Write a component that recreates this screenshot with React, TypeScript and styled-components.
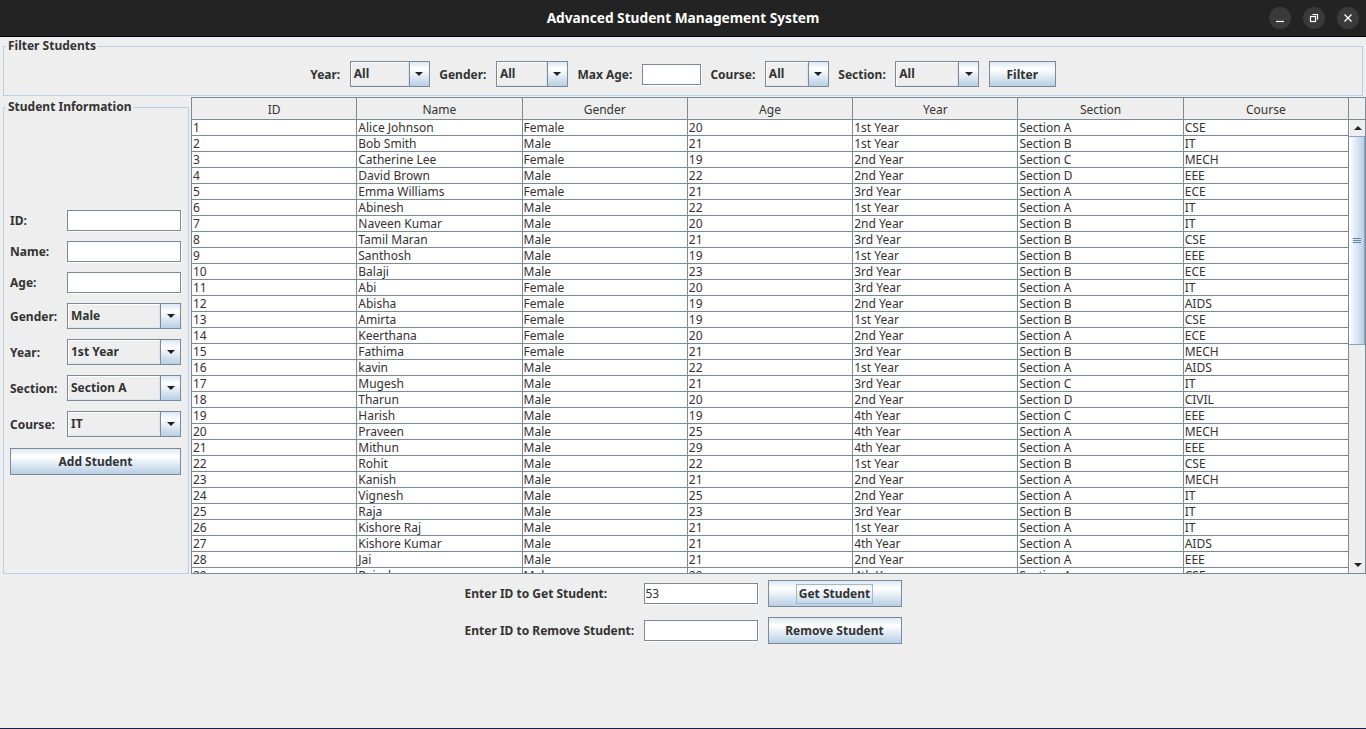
import React from 'react';
import styled, { createGlobalStyle } from 'styled-components';

const GlobalStyle = createGlobalStyle`
  html, body { margin: 0; padding: 0; background: #eeeeee; }
  body { font-family: "Noto Sans", "Open Sans", sans-serif; }
  * { box-sizing: border-box; }
`;

const Window = styled.div`
  width: 1366px;
  height: 729px;
  display: flex;
  flex-direction: column;
  background: #eeeeee;
  border-bottom: 1px solid #16204a;
  overflow: hidden;
  color: #333333;
  font-family: "Noto Sans", "Open Sans", sans-serif;
`;

const TitleBar = styled.div`
  height: 37px;
  flex: none;
  background: #232323;
  border-bottom: 1px solid #000;
  display: grid;
  grid-template-columns: 1fr auto 1fr;
  align-items: center;
`;

const Title = styled.div`
  color: #ffffff;
  font-weight: bold;
  font-size: 13.7px;
  line-height: 20px;
  text-align: center;
`;

const WinButtons = styled.div`
  display: flex;
  justify-content: flex-end;
  gap: 12px;
  margin-right: 7px;
`;

const WinButton = styled.div`
  width: 22px;
  height: 22px;
  border-radius: 50%;
  background: #3a3a3a;
  display: flex;
  align-items: center;
  justify-content: center;
`;

const FieldSet = styled.fieldset`
  margin: 1px 3px 0;
  padding: 7px 0 8px;
  border: 1px solid #b8cfe5;
  min-width: 0;
`;

const Legend = styled.legend`
  font-size: 12px;
  font-weight: bold;
  line-height: 16px;
  padding: 0 2px;
  margin-left: 2px;
  color: #333333;
`;

const FilterRow = styled.div`
  display: flex;
  justify-content: center;
  align-items: center;
  gap: 9.5px;
  height: 26px;
`;

const Label = styled.span`
  font-size: 12px;
  font-weight: bold;
  color: #333333;
  white-space: nowrap;
`;

const ComboBox = styled.div<{ $w: number }>`
  width: ${(p) => p.$w}px;
  height: 26px;
  flex: none;
  display: flex;
  border: 1px solid #7a8a99;
  background: #eeeeee;
`;

const ComboValue = styled.div`
  flex: 1;
  padding-left: 2px;
  font-size: 12px;
  font-weight: bold;
  line-height: 22px;
  border: 1px solid #ffffff;
  border-right-color: #dde4ec;
  border-bottom-color: #dde4ec;
  color: #333333;
`;

const ComboArrow = styled.div`
  width: 20px;
  flex: none;
  border-left: 1px solid #7a8a99;
  background: linear-gradient(to bottom, #dde8f3 0%, #ffffff 30%, #b8cfe5 100%);
  display: flex;
  align-items: center;
  justify-content: center;
`;

const TriangleDown = styled.div`
  width: 0;
  height: 0;
  border-left: 4px solid transparent;
  border-right: 4px solid transparent;
  border-top: 4px solid #222222;
`;

const TriangleUp = styled.div`
  width: 0;
  height: 0;
  border-left: 4px solid transparent;
  border-right: 4px solid transparent;
  border-bottom: 4px solid #222222;
`;

const TextField = styled.div<{ $w: number }>`
  width: ${(p) => p.$w}px;
  height: 21px;
  flex: none;
  background: #ffffff;
  border: 1px solid #7a8a99;
  box-shadow: 1px 1px 0 #ffffff;
  font-size: 12px;
  line-height: 19px;
  padding-left: 1px;
  color: #333333;
`;

const Button = styled.div<{ $w: number; $h: number }>`
  width: ${(p) => p.$w}px;
  height: ${(p) => p.$h}px;
  flex: none;
  border: 1px solid #7a8a99;
  background: linear-gradient(to bottom, #dde8f3 0%, #ffffff 30%, #b8cfe5 100%);
  display: flex;
  align-items: center;
  justify-content: center;
  font-size: 12px;
  font-weight: bold;
  color: #333333;
`;

const FocusText = styled.span`
  outline: 1px solid #a3b8cc;
  padding: 1px 2px;
  line-height: 16px;
`;

const Main = styled.div`
  height: 478px;
  flex: none;
  display: flex;
  padding-left: 3px;
  gap: 2px;
`;

const SideSet = styled.fieldset`
  margin: 3px 0 0 0;
  padding: 0;
  width: 186px;
  height: 475px;
  border: 1px solid #b8cfe5;
  min-width: 0;
  display: flex;
  flex-direction: column;
`;

const FormArea = styled.div`
  flex: 1;
  display: flex;
  align-items: center;
  justify-content: flex-start;
  padding: 0 0 3px 6px;
`;

const FormGrid = styled.div`
  display: grid;
  grid-template-columns: 57px 114px;
  row-gap: 10px;
  align-items: center;
`;

const FullRow = styled.div`
  grid-column: 1 / span 2;
  margin-top: 1px;
`;

const ScrollPane = styled.div`
  margin-top: 1px;
  width: 1175px;
  height: 477px;
  border: 1px solid #7a8a99;
  display: flex;
  background: #ffffff;
`;

const TableArea = styled.div`
  width: 1157px;
  display: flex;
  flex-direction: column;
  overflow: hidden;
`;

const HeaderRow = styled.div`
  height: 22px;
  flex: none;
  display: grid;
  grid-template-columns: repeat(7, 1fr);
  border-bottom: 1px solid #7a8a99;
  background: #eeeeee;
`;

const HeaderCell = styled.div`
  border-right: 1px solid #7a8a99;
  font-size: 12px;
  line-height: 23px;
  text-align: center;
  color: #333333;
`;

const Body = styled.div`
  flex: 1;
  overflow: hidden;
  background: #ffffff;
`;

const Row = styled.div`
  height: 16px;
  display: grid;
  grid-template-columns: repeat(7, 1fr);
  border-bottom: 1px solid #7a8a99;
`;

const Cell = styled.div`
  border-right: 1px solid #7a8a99;
  font-size: 12px;
  line-height: 15px;
  padding-left: 1px;
  white-space: nowrap;
  overflow: hidden;
  color: #333333;
`;

const ScrollBar = styled.div`
  width: 16px;
  display: flex;
  flex-direction: column;
  background: #eeeeee;
`;

const Corner = styled.div`
  height: 22px;
  flex: none;
  background: #eeeeee;
  border-bottom: 1px solid #7a8a99;
`;

const ArrowButton = styled.div`
  height: 16px;
  flex: none;
  background: #eeeeee;
  display: flex;
  align-items: center;
  justify-content: center;
  border-left: 1px solid #ffffff;
`;

const Thumb = styled.div<{ $h: number }>`
  height: ${(p) => p.$h}px;
  flex: none;
  border-top: 1px solid #8ba4c4;
  border-bottom: 1px solid #8ba4c4;
  border-right: 1px solid #8ba4c4;
  background: linear-gradient(to right, #ffffff 0%, #eaf1f8 30%, #b8cfe5 100%);
  display: flex;
  align-items: center;
  justify-content: center;
`;

const Grip = styled.div`
  width: 8px;
  height: 5px;
  background: repeating-linear-gradient(to bottom, #6383b3 0 1px, transparent 1px 2px);
`;

const Track = styled.div`
  flex: 1;
  background: #eeeeee;
`;

const BottomPanel = styled.div`
  flex: 1;
  display: flex;
  justify-content: center;
  padding-top: 6px;
`;

const BottomGrid = styled.div`
  display: grid;
  grid-template-columns: 179px 124px 134px;
  grid-auto-rows: 27px;
  row-gap: 10px;
  align-items: center;
  align-content: start;
`;

const Combo = ({ w, value }: { w: number; value: string }) => (
  <ComboBox $w={w}>
    <ComboValue>{value}</ComboValue>
    <ComboArrow>
      <TriangleDown />
    </ComboArrow>
  </ComboBox>
);

const columns = ['ID', 'Name', 'Gender', 'Age', 'Year', 'Section', 'Course'];

const rows: string[][] = [
  ['1', 'Alice Johnson', 'Female', '20', '1st Year', 'Section A', 'CSE'],
  ['2', 'Bob Smith', 'Male', '21', '1st Year', 'Section B', 'IT'],
  ['3', 'Catherine Lee', 'Female', '19', '2nd Year', 'Section C', 'MECH'],
  ['4', 'David Brown', 'Male', '22', '2nd Year', 'Section D', 'EEE'],
  ['5', 'Emma Williams', 'Female', '21', '3rd Year', 'Section A', 'ECE'],
  ['6', 'Abinesh', 'Male', '22', '1st Year', 'Section A', 'IT'],
  ['7', 'Naveen Kumar', 'Male', '20', '2nd Year', 'Section B', 'IT'],
  ['8', 'Tamil Maran', 'Male', '21', '3rd Year', 'Section B', 'CSE'],
  ['9', 'Santhosh', 'Male', '19', '1st Year', 'Section B', 'EEE'],
  ['10', 'Balaji', 'Male', '23', '3rd Year', 'Section B', 'ECE'],
  ['11', 'Abi', 'Female', '20', '3rd Year', 'Section A', 'IT'],
  ['12', 'Abisha', 'Female', '19', '2nd Year', 'Section B', 'AIDS'],
  ['13', 'Amirta', 'Female', '19', '1st Year', 'Section B', 'CSE'],
  ['14', 'Keerthana', 'Female', '20', '2nd Year', 'Section A', 'ECE'],
  ['15', 'Fathima', 'Female', '21', '3rd Year', 'Section B', 'MECH'],
  ['16', 'kavin', 'Male', '22', '1st Year', 'Section A', 'AIDS'],
  ['17', 'Mugesh', 'Male', '21', '3rd Year', 'Section C', 'IT'],
  ['18', 'Tharun', 'Male', '20', '2nd Year', 'Section D', 'CIVIL'],
  ['19', 'Harish', 'Male', '19', '4th Year', 'Section C', 'EEE'],
  ['20', 'Praveen', 'Male', '25', '4th Year', 'Section A', 'MECH'],
  ['21', 'Mithun', 'Male', '29', '4th Year', 'Section A', 'EEE'],
  ['22', 'Rohit', 'Male', '22', '1st Year', 'Section B', 'CSE'],
  ['23', 'Kanish', 'Male', '21', '2nd Year', 'Section A', 'MECH'],
  ['24', 'Vignesh', 'Male', '25', '2nd Year', 'Section A', 'IT'],
  ['25', 'Raja', 'Male', '23', '3rd Year', 'Section B', 'IT'],
  ['26', 'Kishore Raj', 'Male', '21', '1st Year', 'Section A', 'IT'],
  ['27', 'Kishore Kumar', 'Male', '21', '4th Year', 'Section A', 'AIDS'],
  ['28', 'Jai', 'Male', '21', '2nd Year', 'Section A', 'EEE'],
  ['29', 'Rajesh', 'Male', '20', '4th Year', 'Section A', 'CSE'],
];

export default function App() {
  return (
    <>
      <GlobalStyle />
      <Window>
        <TitleBar>
          <div />
          <Title>Advanced Student Management System</Title>
          <WinButtons>
            <WinButton>
              <svg width="10" height="10" viewBox="0 0 10 10">
                <line x1="1" y1="8.5" x2="9" y2="8.5" stroke="#fff" strokeWidth="1.2" />
              </svg>
            </WinButton>
            <WinButton>
              <svg width="10" height="10" viewBox="0 0 10 10">
                <rect x="1.5" y="3.5" width="5" height="5" fill="none" stroke="#fff" strokeWidth="1.2" />
                <path d="M3.5 1.5 H8.5 V6.5" fill="none" stroke="#fff" strokeWidth="1.2" />
              </svg>
            </WinButton>
            <WinButton>
              <svg width="10" height="10" viewBox="0 0 10 10">
                <path d="M1.5 1.5 L8.5 8.5 M8.5 1.5 L1.5 8.5" stroke="#fff" strokeWidth="1.3" />
              </svg>
            </WinButton>
          </WinButtons>
        </TitleBar>

        <FieldSet>
          <Legend>Filter Students</Legend>
          <FilterRow>
            <Label>Year:</Label>
            <Combo w={80} value="All" />
            <Label>Gender:</Label>
            <Combo w={72} value="All" />
            <Label>Max Age:</Label>
            <TextField $w={59} />
            <Label>Course:</Label>
            <Combo w={64} value="All" />
            <Label>Section:</Label>
            <Combo w={84} value="All" />
            <Button $w={67} $h={26}>Filter</Button>
          </FilterRow>
        </FieldSet>

        <Main>
          <SideSet>
            <Legend>Student Information</Legend>
            <FormArea>
              <FormGrid>
                <Label>ID:</Label>
                <TextField $w={114} />
                <Label>Name:</Label>
                <TextField $w={114} />
                <Label>Age:</Label>
                <TextField $w={114} />
                <Label>Gender:</Label>
                <Combo w={114} value="Male" />
                <Label>Year:</Label>
                <Combo w={114} value="1st Year" />
                <Label>Section:</Label>
                <Combo w={114} value="Section A" />
                <Label>Course:</Label>
                <Combo w={114} value="IT" />
                <FullRow>
                  <Button $w={171} $h={27}>Add Student</Button>
                </FullRow>
              </FormGrid>
            </FormArea>
          </SideSet>

          <ScrollPane>
            <TableArea>
              <HeaderRow>
                {columns.map((c) => (
                  <HeaderCell key={c}>{c}</HeaderCell>
                ))}
              </HeaderRow>
              <Body>
                {rows.map((r) => (
                  <Row key={r[0]}>
                    {r.map((v, i) => (
                      <Cell key={i}>{v}</Cell>
                    ))}
                  </Row>
                ))}
              </Body>
            </TableArea>
            <ScrollBar>
              <Corner />
              <ArrowButton>
                <TriangleUp />
              </ArrowButton>
              <Thumb $h={209}>
                <Grip />
              </Thumb>
              <Track />
              <ArrowButton>
                <TriangleDown />
              </ArrowButton>
            </ScrollBar>
          </ScrollPane>
        </Main>

        <BottomPanel>
          <BottomGrid>
            <Label>Enter ID to Get Student:</Label>
            <TextField $w={114}>53</TextField>
            <Button $w={134} $h={27}>
              <FocusText>Get Student</FocusText>
            </Button>
            <Label>Enter ID to Remove Student:</Label>
            <TextField $w={114} />
            <Button $w={134} $h={27}>Remove Student</Button>
          </BottomGrid>
        </BottomPanel>
      </Window>
    </>
  );
}
